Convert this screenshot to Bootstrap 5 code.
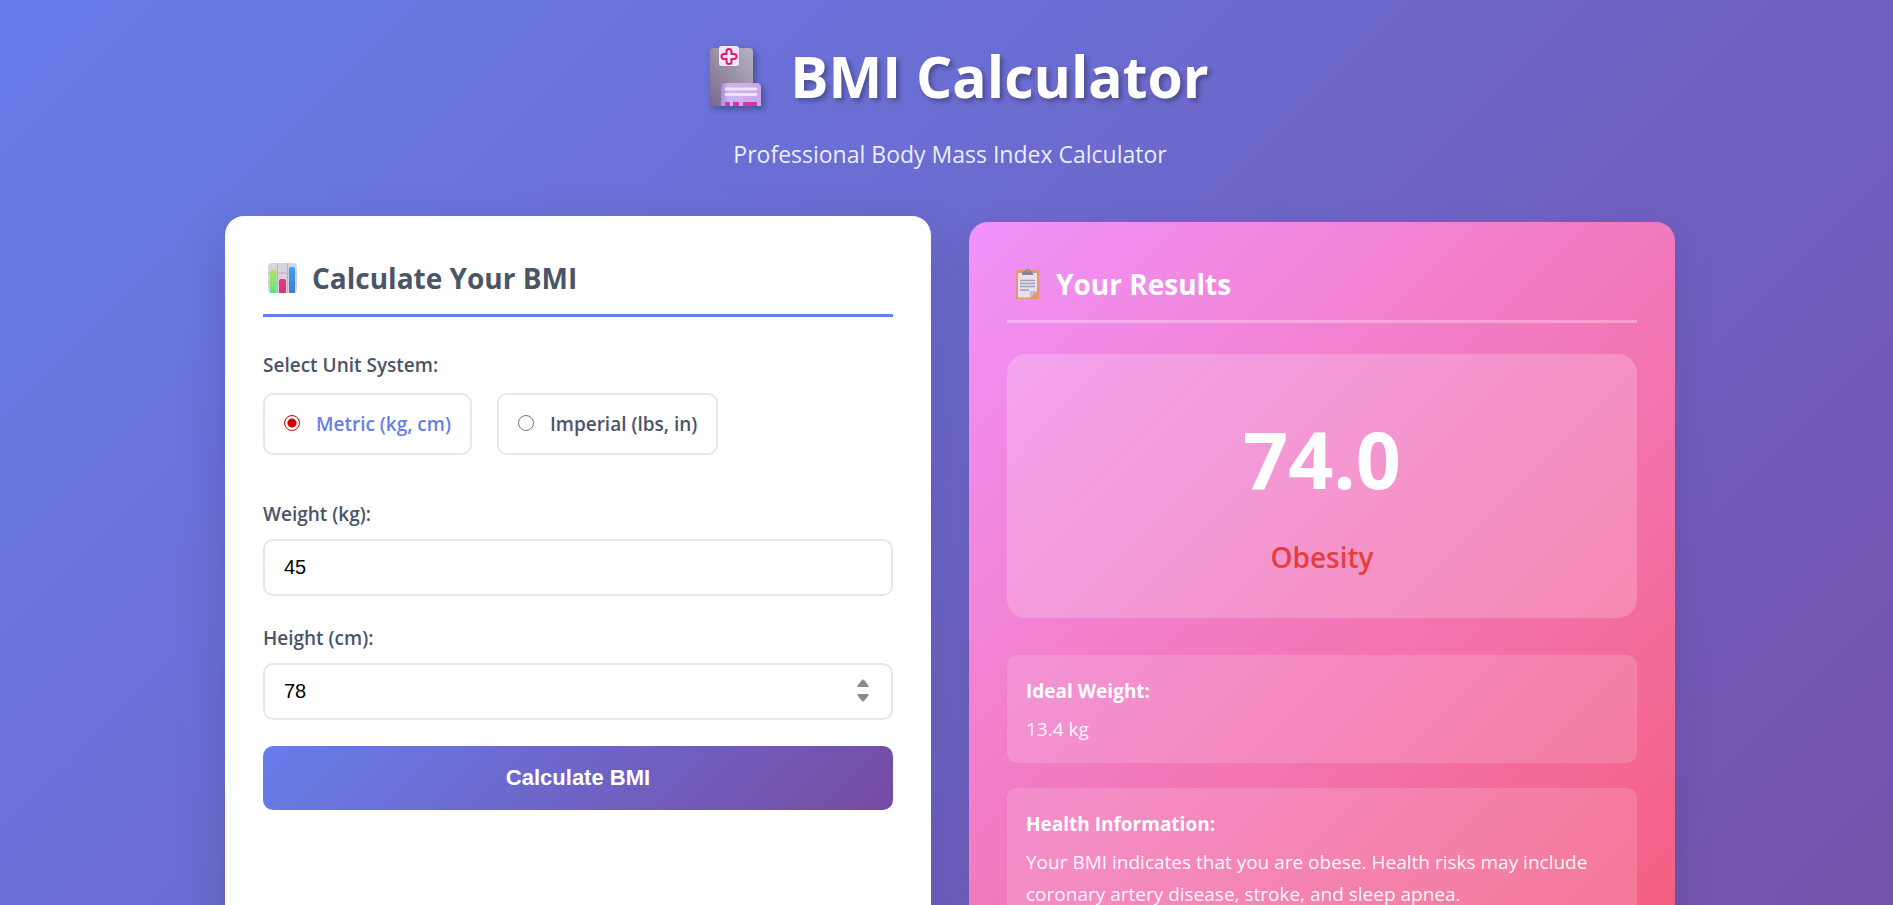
<!DOCTYPE html>
<html lang="en">
<head>
<meta charset="utf-8">
<meta name="viewport" content="width=device-width, initial-scale=1">
<title>BMI Calculator</title>
<link href="https://cdn.jsdelivr.net/npm/bootstrap@5.3.0/dist/css/bootstrap.min.css" rel="stylesheet">
<style>
  body { font-family: "Open Sans", "Noto Sans", sans-serif; font-size: 19px; line-height: 32px; color: #4a5568; background: #764ba2; }
  .page-shell { height: 100vh; overflow: hidden; }
  .page-bg { min-height: 1300px; background: linear-gradient(135deg, #667eea 0%, #764ba2 100%); padding: 28px 0 50px 7px; }
  .shell { max-width: 1500px; padding: 0 25px; }
  .site-title { font-size: 57px; line-height: 96px; font-weight: 700; color: #fff; text-shadow: 3px 3px 5px rgba(0,0,0,.3); gap: 28px; margin-bottom: 11px; padding-left: 18px; }
  .site-title svg { width: 53px; height: 60px; filter: drop-shadow(3px 3px 3px rgba(0,0,0,.3)); }
  .tagline { font-size: 23px; line-height: 38px; color: rgba(255,255,255,.9); margin-bottom: 49px; }
  .panels { gap: 38px; }
  .panel { flex: 1 1 0; min-width: 0; min-height: 930px; border-radius: 19px; padding: 38px; box-shadow: 0 12px 38px rgba(0,0,0,.1); }
  .panel-form { background: #fff; margin-top: -6px; box-shadow: 0 18px 50px rgba(0,0,0,.15); }
  .panel-results { background: linear-gradient(135deg, #f093fb 0%, #f5576c 100%); color: #fff; }
  .panel-title { font-size: 28px; line-height: 48px; font-weight: 700; padding-bottom: 12px; margin-bottom: 32px; border-bottom: 3px solid #667eea; }
  .panel-title svg { width: 40px; height: 32px; margin-right: 9px; flex: none; }
  .panel-results .panel-title { border-color: rgba(255,255,255,.3); margin-bottom: 31px; }
  .field-label { display: block; font-size: 19px; font-weight: 600; line-height: 32px; margin-bottom: 9px; padding: 0; float: none; }
  .unit-group { margin-bottom: 43px; }
  .unit-group .field-label { margin-bottom: 12px; }
  .unit-list { gap: 25px; }
  .unit-option { border: 2px solid #e2e8f0; border-radius: 10px; padding: 13px 19px; font-weight: 600; gap: 16px; cursor: pointer; }
  .unit-option input { appearance: none; width: 16px; height: 16px; border: 1px solid #767676; border-radius: 50%; background: #fff; margin: 0 0 3px; }
  .unit-option input:checked { border: 1px solid #d40000; background: radial-gradient(circle, #d40000 0 4px, #fff 5px); }
  .unit-option input:checked + span { color: #667eea; }
  .field-block { margin-bottom: 26px; }
  .number-box { display: block; width: 100%; height: 57px; border: 2px solid #e2e8f0; border-radius: 10px; padding: 0 19px; color: #000; background: #fff; font: 20px "Liberation Sans", Arial, sans-serif; appearance: textfield; }
  .number-box::-webkit-inner-spin-button { display: none; }
  .spinner { right: 23px; top: 16px; width: 14px; height: 24px; pointer-events: none; }
  .btn-calc { width: 100%; height: 64px; border: 0; border-radius: 10px; background: linear-gradient(135deg, #667eea 0%, #764ba2 100%); color: #fff; font: 700 22px "Liberation Sans", Arial, sans-serif; }
  .score-card { background: rgba(255,255,255,.2); border-radius: 19px; padding: 41px 38px 37px; margin-bottom: 37px; }
  .score { font-size: 79px; line-height: 128px; font-weight: 700; margin-bottom: 10px; }
  .verdict { font-size: 28px; line-height: 48px; font-weight: 600; color: #e53e3e; }
  .info-card { background: rgba(255,255,255,.15); border-radius: 10px; padding: 20px 19px 18px; margin-bottom: 25px; }
  .info-card h3 { font-size: 19px; line-height: 32px; font-weight: 700; margin-bottom: 6px; }
  .info-card p { color: rgba(255,255,255,.95); margin: 0; }
</style>
</head>
<body>
<div class="page-shell">
<div class="page-bg">
  <div class="shell mx-auto">
    <header class="text-center">
      <h1 class="site-title d-flex justify-content-center align-items-center">
        <svg viewBox="0 0 53 60" aria-hidden="true">
          <defs>
            <linearGradient id="tower" x1="0" y1="1" x2="1" y2="0"><stop offset="0" stop-color="#7c6595"/><stop offset=".5" stop-color="#9990a3"/><stop offset="1" stop-color="#b8b0c4"/></linearGradient>
            <linearGradient id="wing" x1="0" y1="0" x2="1" y2="0"><stop offset="0" stop-color="#ab8bd9"/><stop offset=".2" stop-color="#d1b5f2"/><stop offset="1" stop-color="#c5a8e5"/></linearGradient>
          </defs>
          <path d="M1 60V6q0-4 4-4h35q4 0 4 4v54z" fill="url(#tower)"/>
          <path d="M12 60V42q0-5 5-5h31q4 0 4 4v19z" fill="url(#wing)"/>
          <path d="M17 43h30M17 48.500h30" stroke="#f0e2ff" stroke-width="2.800" stroke-linecap="round"/>
          <path d="M16 60v-3q0-1 1-1h4v4zm8 0v-4h6v4zm10 0v-4h13q1 0 1 1v3z" fill="#d832b4"/>
          <rect x="10" y="0" width="20" height="20" rx="2.500" fill="#f1e3fc"/>
          <path d="M17.500 8V5.500a2.500 2.500 0 0 1 5 0V8H25a2.500 2.500 0 0 1 0 5h-2.500v2.500a2.500 2.500 0 0 1-5 0V13H15a2.500 2.500 0 0 1 0-5z" fill="#f5eafd" stroke="#e01a5c" stroke-width="2"/>
        </svg>
        <span>BMI Calculator</span>
      </h1>
      <p class="tagline">Professional Body Mass Index Calculator</p>
    </header>

    <main class="panels d-flex align-items-stretch">
      <section class="panel panel-form">
        <h2 class="panel-title d-flex align-items-center">
          <svg viewBox="0 0 40 32" aria-hidden="true">
            <defs>
              <linearGradient id="bar-a" x2="0" y2="1"><stop stop-color="#b5e35c"/><stop offset="1" stop-color="#62e08c"/></linearGradient>
              <linearGradient id="bar-b" x2="0" y2="1"><stop stop-color="#f03084"/><stop offset="1" stop-color="#c83a7c"/></linearGradient>
              <linearGradient id="bar-c" x2="0" y2="1"><stop stop-color="#38a8f4"/><stop offset="1" stop-color="#4478d0"/></linearGradient>
            </defs>
            <rect x="5" y="1" width="29" height="30" rx="4" fill="#d9d3e0"/>
            <path d="M14.500 1v30M24.500 1v30M5 11h29M5 21h29" stroke="#b9b2c2"/>
            <path d="M7 31V9.500q0-1.500 1.500-1.500h3.500q1.500 0 1.500 1.500V31z" fill="url(#bar-a)"/>
            <path d="M16 31V18.500q0-1.500 1.500-1.500h4q1.500 0 1.500 1.500V31z" fill="url(#bar-b)"/>
            <path d="M26 31V6.500Q26 5 27.500 5h3q1.500 0 1.500 1.500V31z" fill="url(#bar-c)"/>
          </svg>
          <span>Calculate Your BMI</span>
        </h2>
        <form onsubmit="return false">
          <fieldset class="unit-group">
            <legend class="field-label">Select Unit System:</legend>
            <div class="unit-list d-flex flex-wrap">
              <label class="unit-option d-flex align-items-center"><input type="radio" name="unit" checked><span>Metric (kg, cm)</span></label>
              <label class="unit-option d-flex align-items-center"><input type="radio" name="unit"><span>Imperial (lbs, in)</span></label>
            </div>
          </fieldset>
          <div class="field-block">
            <label class="field-label" for="weight">Weight (kg):</label>
            <input class="number-box" id="weight" type="number" value="45">
          </div>
          <div class="field-block">
            <label class="field-label" for="height">Height (cm):</label>
            <div class="position-relative">
              <input class="number-box" id="height" type="number" value="78">
              <svg class="spinner position-absolute" viewBox="0 0 14 24" fill="#8b8b8b" aria-hidden="true"><path d="M5.500 1.500Q7-.5 8.500 1.500l4 5q.5 1.500-1 1.500h-9Q1 8 1.500 6.500zM5.500 21.500q1.500 2 3 0l4-5q.5-1.500-1-1.500h-9Q1 15 1.500 16.500z"/></svg>
            </div>
          </div>
          <button class="btn-calc" type="submit">Calculate BMI</button>
        </form>
      </section>

      <section class="panel panel-results">
        <h2 class="panel-title d-flex align-items-center">
          <svg viewBox="0 0 40 32" aria-hidden="true">
            <rect x="9" y="2" width="23" height="29" rx="1" fill="#e49a68"/>
            <path d="M11 5h19v18l-7 6.500H11z" fill="#e8e0f2"/>
            <path d="M30 23l-7 6.500V24q0-1 1-1z" fill="#c5bad6"/>
            <path d="M13 12.500h15M13 15.500h15M13 18.500h15M13 22h9" stroke="#a79fb2" stroke-width="1.400"/>
            <path d="M15 7V5q0-2 3-2 0-2 2.500-2T23 3q3 0 3 2v2z" fill="#8c8195"/>
            <circle cx="20.500" cy="3" r="1" fill="#d99a86"/>
          </svg>
          <span>Your Results</span>
        </h2>
        <div class="score-card text-center">
          <div class="score">74.0</div>
          <div class="verdict">Obesity</div>
        </div>
        <div class="info-card">
          <h3>Ideal Weight:</h3>
          <p>13.4 kg</p>
        </div>
        <div class="info-card">
          <h3>Health Information:</h3>
          <p>Your BMI indicates that you are obese. Health risks may include coronary artery disease, stroke, and sleep apnea.</p>
        </div>
      </section>
    </main>
  </div>
</div>
</div>
<script src="https://cdn.jsdelivr.net/npm/bootstrap@5.3.0/dist/js/bootstrap.bundle.min.js"></script>
</body>
</html>
